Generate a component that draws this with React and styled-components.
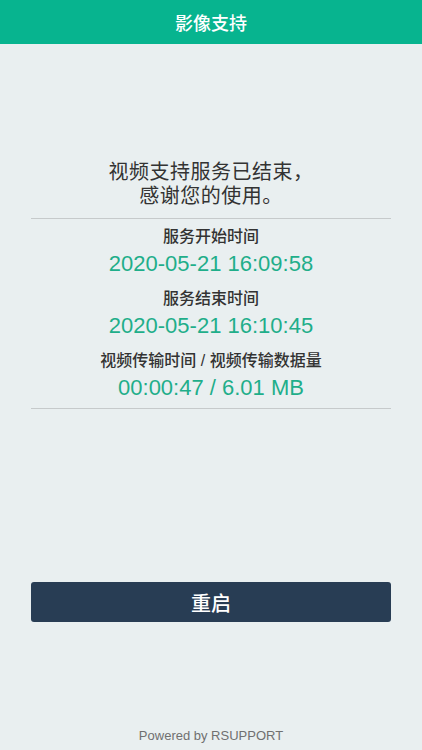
import React from 'react';
import styled, { createGlobalStyle } from 'styled-components';

const GlobalStyle = createGlobalStyle`
  html, body {
    margin: 0;
    padding: 0;
    background: #e9eff0;
  }
  body {
    font-family: "Liberation Sans", "Noto Sans CJK SC", sans-serif;
  }
`;

const Page = styled.div`
  min-height: 100vh;
  display: flex;
  flex-direction: column;
  background: #e9eff0;
`;

const Header = styled.header`
  height: 44px;
  background: #07b48f;
  color: #fff;
  display: flex;
  align-items: center;
  justify-content: center;
  font-size: 18px;
  font-weight: 500;
  font-family: "Noto Sans CJK SC", sans-serif;
`;

const Body = styled.main`
  padding: 115px 31px 0;
  display: flex;
  flex-direction: column;
`;

const Message = styled.div`
  display: flex;
  flex-direction: column;
  align-items: center;
  font-family: "Noto Sans CJK SC", sans-serif;
  font-size: 20px;
  color: #333;
`;

const MessageLine = styled.span`
  display: block;
  height: 24px;
  line-height: 24px;
  letter-spacing: 0.5px;
`;

const Divider = styled.hr`
  margin: ${({ $top }) => $top}px 0 0;
  border: 0;
  height: 1px;
  background: #c6cacb;
`;

const Stats = styled.div`
  display: flex;
  flex-direction: column;
  gap: 10px;
  padding: 7px 0 6px;
`;

const Stat = styled.div`
  display: flex;
  flex-direction: column;
  align-items: center;
  gap: 2px;
`;

const Label = styled.div`
  font-family: "Liberation Sans", "Noto Sans CJK SC", sans-serif;
  font-size: 16px;
  font-weight: 500;
  line-height: 22px;
  color: #333;
`;

const Value = styled.div`
  font-size: 22px;
  line-height: 28px;
  color: #1fae8a;
`;

const RestartButton = styled.button`
  margin: 173px 31px 0;
  height: 40px;
  border: 0;
  border-radius: 3px;
  background: #283d54;
  color: #fff;
  font-family: "Noto Sans CJK SC", sans-serif;
  font-size: 20px;
  font-weight: 500;
  cursor: pointer;
`;

const Footer = styled.footer`
  margin-top: auto;
  padding-bottom: 5px;
  text-align: center;
  font-size: 13px;
  line-height: 18px;
  color: #707070;
`;

const STATS = [
  { label: '服务开始时间', value: '2020-05-21 16:09:58' },
  { label: '服务结束时间', value: '2020-05-21 16:10:45' },
  { label: '视频传输时间 / 视频传输数据量', value: '00:00:47 / 6.01 MB' },
];

export default function App() {
  return (
    <Page>
      <GlobalStyle />
      <Header>影像支持</Header>
      <Body>
        <Message>
          <MessageLine>视频支持服务已结束，</MessageLine>
          <MessageLine>感谢您的使用。</MessageLine>
        </Message>
        <Divider $top={11} />
        <Stats>
          {STATS.map(({ label, value }) => (
            <Stat key={label}>
              <Label>{label}</Label>
              <Value>{value}</Value>
            </Stat>
          ))}
        </Stats>
        <Divider $top={0} />
      </Body>
      <RestartButton>重启</RestartButton>
      <Footer>Powered by RSUPPORT</Footer>
    </Page>
  );
}
